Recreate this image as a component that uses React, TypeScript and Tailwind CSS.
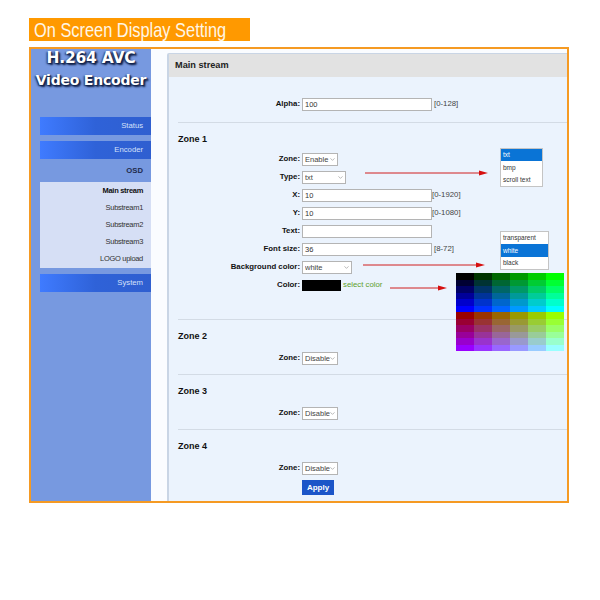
import { ChevronDown } from 'lucide-react'
import type { ReactNode } from 'react'

const STEPS = [0, 51, 102, 153, 204, 255]

function Label({ children }: { children: ReactNode }) {
  return <div className="w-[133px] shrink-0 pr-[2px] text-right font-bold text-[#111]">{children}</div>
}

function Row({ label, children }: { label: string; children?: ReactNode }) {
  return (
    <div className="flex h-[18px] items-center">
      <Label>{label}:</Label>
      {children}
    </div>
  )
}

function TextInput({ value, hint, tight }: { value: string; hint?: string; tight?: boolean }) {
  return (
    <>
      <input
        readOnly
        value={value}
        className="h-[13px] w-[130px] border border-[#b4b4b4] bg-white px-[2px] text-[7.5px] leading-[11px] text-[#333] outline-none"
      />
      {hint && <span className={`text-[#444] ${tight ? '' : 'ml-[2px]'}`}>{hint}</span>}
    </>
  )
}

function Select({ value, width }: { value: string; width: string }) {
  return (
    <div className={`relative h-[13px] ${width}`}>
      <select
        value={value}
        onChange={() => {}}
        className="h-full w-full appearance-none border border-[#b4b4b4] bg-white pl-[2px] text-[7.5px] text-[#444] outline-none"
      >
        <option>{value}</option>
      </select>
      <ChevronDown className="pointer-events-none absolute right-[2px] top-[3px] h-[7px] w-[7px] text-[#888]" />
    </div>
  )
}

function NavButton({ children }: { children: ReactNode }) {
  return (
    <div className="flex h-[18px] items-center justify-end bg-gradient-to-r from-[#3f7bff] via-[#2f62d8] to-[#2f5fd0] pr-[8px] text-[7.7px] text-[#d5e0fa]">
      {children}
    </div>
  )
}

function Sidebar() {
  const items = ['Main stream', 'Substream1', 'Substream2', 'Substream3', 'LOGO upload']
  return (
    <aside className="w-[120px] shrink-0 bg-[#7799e0] pl-[9px] font-['Liberation_Sans',sans-serif]">
      <div className="-ml-[9px] -mt-[1px] h-[69px] text-center font-['DejaVu_Sans',sans-serif] font-bold leading-[22px] text-white [text-shadow:1px_1px_1px_#14244d,-1px_1px_2px_#14244d,2px_2px_2px_#14244d]">
        <div className="text-[15.5px] leading-[21px] -tracking-[0.2px]">H.264 AVC</div>
        <div className="whitespace-nowrap text-[14px] -tracking-[0.2px]">Video Encoder</div>
      </div>
      <div className="flex flex-col gap-[6px]">
        <NavButton>Status</NavButton>
        <NavButton>Encoder</NavButton>
      </div>
      <div className="flex h-[23px] items-center justify-end pr-[8px] text-[7.7px] font-bold text-[#222b4d]">OSD</div>
      <div className="h-[86px] bg-[#d6dff5] pr-[8px] text-right text-[7.5px] tracking-[-0.3px] text-[#333]">
        {items.map((item, i) => (
          <div key={item} className={`flex h-[17px] items-center justify-end ${i === 0 ? 'font-bold text-[#111]' : ''}`}>
            {item}
          </div>
        ))}
      </div>
      <div className="mt-[6px]">
        <NavButton>System</NavButton>
      </div>
    </aside>
  )
}

function ZoneHeader({ name }: { name: string }) {
  return <div className="pl-[9px] text-[9px] font-bold leading-[12px] text-[#111]">{name}</div>
}

function Divider() {
  return <div className="ml-[9px] h-px bg-[#d3dbe5]" />
}

function SimpleZone({ name }: { name: string }) {
  return (
    <>
      <div className="pt-[10px]">
        <ZoneHeader name={name} />
      </div>
      <div className="pt-[7px]">
        <Row label="Zone">
          <Select value="Disable" width="w-[36px]" />
        </Row>
      </div>
    </>
  )
}

function Panel() {
  return (
    <section className="ml-[16px] mt-[4px] flex-1 overflow-hidden rounded-tl-[2px] border-l-2 border-t border-[#c9d5e5] bg-[#ebf3fd] font-['Liberation_Sans',sans-serif] text-[7.8px]">
      <div className="flex h-[23px] items-center bg-[#e2e2e2] pl-[6px] text-[9.2px] font-bold text-[#222]">Main stream</div>
      <div className="pt-[18px]">
        <Row label="Alpha">
          <TextInput value="100" hint="[0-128]" />
        </Row>
      </div>
      <div className="mt-[9px]">
        <Divider />
      </div>
      <div className="pt-[10px]">
        <ZoneHeader name="Zone 1" />
      </div>
      <div className="pt-[5px]">
        <Row label="Zone">
          <Select value="Enable" width="w-[36px]" />
        </Row>
        <Row label="Type">
          <Select value="txt" width="w-[44px]" />
        </Row>
        <Row label="X">
          <TextInput value="10" hint="[0-1920]" tight />
        </Row>
        <Row label="Y">
          <TextInput value="10" hint="[0-1080]" tight />
        </Row>
        <Row label="Text">
          <TextInput value="" />
        </Row>
        <Row label="Font size">
          <TextInput value="36" hint="[8-72]" />
        </Row>
        <Row label="Background color">
          <Select value="white" width="w-[50px]" />
        </Row>
        <Row label="Color">
          <div className="h-[11px] w-[39px] bg-black" />
          <span className="ml-[2px] text-[#5ea02c]">select color</span>
        </Row>
      </div>
      <div className="mt-[25px]">
        <Divider />
      </div>
      <SimpleZone name="Zone 2" />
      <div className="mt-[7px]">
        <Divider />
      </div>
      <SimpleZone name="Zone 3" />
      <div className="mt-[7px]">
        <Divider />
      </div>
      <SimpleZone name="Zone 4" />
      <div className="flex pl-[133px] pt-[3px]">
        <button className="h-[15px] w-[32px] bg-[#1c55c8] text-[8px] font-bold text-white">Apply</button>
      </div>
    </section>
  )
}

function Popup({ options, selected, className }: { options: string[]; selected: string; className: string }) {
  return (
    <div className={`absolute border border-[#c4c4c4] bg-white font-['Liberation_Sans',sans-serif] text-[6.5px] text-[#333] ${className}`}>
      {options.map((option) => (
        <div
          key={option}
          className={`flex h-[12.4px] items-center pl-[2px] ${option === selected ? 'bg-[#0a74d6] text-white' : ''}`}
        >
          {option}
        </div>
      ))}
    </div>
  )
}

function Arrow({ className, width }: { className: string; width: number }) {
  return (
    <svg className={`absolute ${className}`} width={width} height={6} viewBox={`0 0 ${width} 6`}>
      <line x1="0" y1="3" x2={width - 6} y2="3" stroke="#d01f1f" strokeWidth="1" />
      <polygon points={`${width - 9},0.6 ${width},3 ${width - 9},5.4`} fill="#d60f0f" />
    </svg>
  )
}

function Palette() {
  return (
    <div className="absolute left-[425px] top-[224px] grid w-[108px] grid-cols-6">
      {[0, 153].flatMap((r) =>
        STEPS.flatMap((b) =>
          STEPS.map((g) => (
            <div key={`${r}-${g}-${b}`} className="h-[6.5px]" style={{ backgroundColor: `rgb(${r},${g},${b})` }} />
          )),
        ),
      )}
    </div>
  )
}

export default function App() {
  return (
    <div className="h-[600px] w-[600px] bg-white pl-[29px] pt-[18px]">
      <div className="flex h-[23px] w-[221px] items-center bg-[#ff9900] pl-[5px] font-['Liberation_Sans',sans-serif] text-[21px] text-[#fff6e6]">
        <span className="origin-left scale-x-[0.78] whitespace-nowrap">On Screen Display Setting</span>
      </div>
      <div className="relative mt-[6px] flex h-[456px] w-[540px] border-2 border-[#f59a23] bg-[#fafcff]">
        <Sidebar />
        <Panel />
        <Popup className="left-[469px] top-[99px] w-[43px]" options={['txt', 'bmp', 'scroll text']} selected="txt" />
        <Popup
          className="left-[469px] top-[182px] w-[49px]"
          options={['transparent', 'white', 'black']}
          selected="white"
        />
        <Arrow className="left-[334px] top-[121px]" width={123} />
        <Arrow className="left-[332px] top-[213px]" width={122} />
        <Arrow className="left-[359px] top-[236px]" width={57} />
        <Palette />
      </div>
    </div>
  )
}
